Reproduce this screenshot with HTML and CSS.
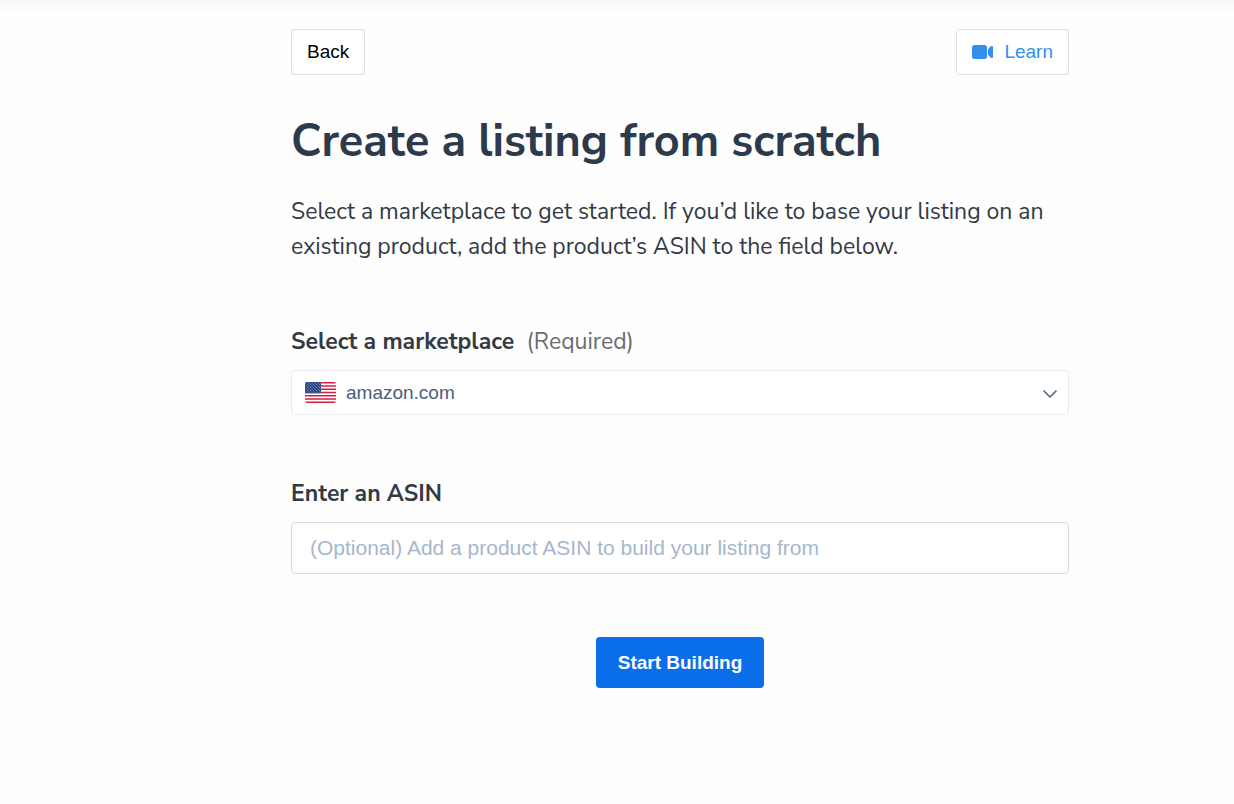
FILE: index.html
```html
<!doctype html>
<html lang="en">
<head>
<meta charset="utf-8">
<title>Create a listing from scratch</title>
<link rel="stylesheet" href="styles.css">
</head>

<body>

<main class="page">
    <div class="toolbar">
        <button type="button" class="btn">Back</button>
        <button type="button" class="btn btn-learn">
            <svg class="icon-video" viewBox="0 0 22 16" aria-hidden="true">
                <rect x="0" y="1" width="15" height="14" rx="2.500"/>
                <path d="M21 3.200v9.600c0 1.200-1 1.500-2 .9l-1.800-1.400c-.9-.9-1.200-1.800-1.200-2.800v-3c0-1 .3-1.900 1.200-2.800l1.800-1.400c1-.6 2-.3 2 .9z"/>
            </svg>
            Learn
        </button>
    </div>

    <h1 class="title">Create a listing from scratch</h1>
    <p class="intro">Select a marketplace to get started. If you’d like to base your listing on an existing product, add the product’s ASIN to the field below.</p>

    <form class="form">
        <div class="field">
            <label class="label" for="marketplace">Select a marketplace <span class="hint">(Required)</span></label>
            <div class="select-box">
                <svg class="flag" viewBox="0 0 31 21" aria-hidden="true">
                    <defs>
                        <clipPath id="flagClip"><rect width="31" height="21" rx="2"/></clipPath>
                        <pattern id="stars" width="3" height="3" patternUnits="userSpaceOnUse">
                            <rect width="3" height="3" fill="#1f3f80"/>
                            <circle cx="1" cy="1" r=".6" fill="#c3cde2"/>
                            <circle cx="2.500" cy="2.500" r=".5" fill="#a9b7d5"/>
                        </pattern>
                    </defs>
                    <g clip-path="url(#flagClip)">
                        <rect width="31" height="21" fill="#fff"/>
                        <path stroke="#cf1f42" stroke-width="1.620" d="M0 .81h31M0 4.040h31M0 7.270h31M0 10.500h31M0 13.730h31M0 16.960h31M0 20.190h31"/>
                        <rect width="16" height="11.300" fill="url(#stars)"/>
                    </g>
                </svg>
                <select class="select" id="marketplace" name="marketplace" required>
                    <option>amazon.com</option>
                </select>
                <svg class="chevron" viewBox="0 0 16 10" aria-hidden="true"><path d="M1.500 1.500 8 8l6.500-6.500"/></svg>
            </div>
        </div>

        <div class="field">
            <label class="label" for="asin">Enter an ASIN</label>
            <input class="input" type="text" id="asin" name="asin" placeholder="(Optional) Add a product ASIN to build your listing from">
        </div>

        <button type="submit" class="btn-submit">Start Building</button>
    </form>
</main>

</body>
</html>
```
FILE: styles.css
```css
*{
    box-sizing: border-box;
}
body{
    margin: 0;
    background: #fefefe linear-gradient(#f8f8f8, #fefefe) no-repeat;
    background-size: 100% 16px;
    color: #323a43;
    font-family: "Nunito Sans", Nunito, Lato, sans-serif;
}
button, input, select{
    font-family: "Liberation Sans", Arial, sans-serif;
}
.page{
    padding: 29px 165px 64px 291px;
}
.toolbar{
    display: flex;
    justify-content: space-between;
}
.btn{
    display: flex;
    align-items: center;
    height: 46px;
    padding: 0 15px;
    border: 1px solid #d9e0ea;
    border-radius: 4px;
    background: #fff;
    color: #000;
    font-size: 19px;
}
.btn-learn{
    gap: 10px;
    color: #338eef;
}
.icon-video{
    width: 22px;
    height: 16px;
    fill: #338eef;
}
.title{
    margin: 37px 0 0;
    color: #2c3a4b;
    font-size: 45px;
    line-height: 60px;
    font-weight: bold;
}
.intro{
    margin: 22px 0 0;
    font-size: 23px;
    line-height: 35px;
}
.form{
    display: flex;
    flex-direction: column;
    gap: 63px;
    margin-top: 62px;
}
.field{
    display: flex;
    flex-direction: column;
    gap: 12px;
}
.label{
    font-size: 23px;
    line-height: 32px;
    font-weight: bold;
}
.hint{
    margin-left: 6px;
    color: #6c6c70;
    font-weight: normal;
}
.select-box{
    position: relative;
}
.select{
    display: block;
    width: 100%;
    height: 45px;
    padding: 0 40px 0 54px;
    border: 1px solid #ebebed;
    border-radius: 3px;
    background: #fff;
    color: #4a607a;
    font-size: 19px;
    appearance: none;
}
.flag{
    position: absolute;
    top: 12px;
    left: 14px;
    width: 31px;
    height: 21px;
}
.chevron{
    position: absolute;
    top: 19px;
    right: 11px;
    width: 16px;
    height: 10px;
    fill: none;
    stroke: #4a607a;
    stroke-width: 1.5;
    pointer-events: none;
}
.input{
    width: 100%;
    height: 52px;
    padding: 0 18px;
    border: 1px solid #d9dadd;
    border-radius: 4px;
    background: #fff;
    color: #323a43;
    font-size: 21px;
}
.input::placeholder{
    color: #a5b7cb;
    opacity: 1;
}
.btn-submit{
    align-self: center;
    height: 51px;
    padding: 0 22px;
    border: 0;
    border-radius: 4px;
    background: #0a6eeb;
    color: #fff;
    font-size: 19px;
    font-weight: bold;
}
```
